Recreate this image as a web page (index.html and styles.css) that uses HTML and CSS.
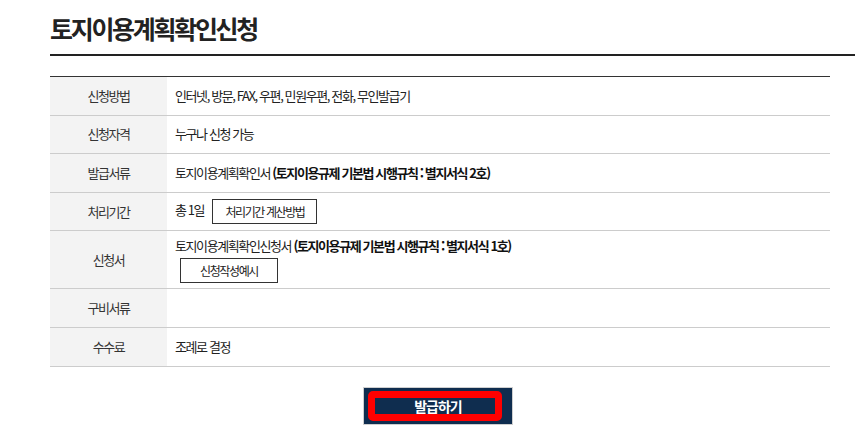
FILE: index.html
```html
<!DOCTYPE html>
<html lang="ko">
<head>
<meta charset="utf-8">
<title>토지이용계획확인신청</title>
<link rel="stylesheet" href="styles.css">
</head>
<body>
<div class="page">
  <h1 class="title">토지이용계획확인신청</h1>
  <table class="info">
    <tbody>
      <tr>
        <th>신청방법</th>
        <td>인터넷, 방문, FAX, 우편, 민원우편, 전화, 무인발급기</td>
      </tr>
      <tr>
        <th>신청자격</th>
        <td>누구나 신청 가능</td>
      </tr>
      <tr>
        <th>발급서류</th>
        <td>토지이용계획확인서 <b>(토지이용규제 기본법 시행규칙 : 별지서식 2호)</b></td>
      </tr>
      <tr>
        <th>처리기간</th>
        <td>총 1일 <span class="box-btn btn-calc">처리기간 계산방법</span></td>
      </tr>
      <tr class="tall">
        <th>신청서</th>
        <td>토지이용계획확인신청서 <b>(토지이용규제 기본법 시행규칙 : 별지서식 1호)</b><br><span class="box-btn btn-sample">신청작성예시</span></td>
      </tr>
      <tr>
        <th>구비서류</th>
        <td></td>
      </tr>
      <tr>
        <th>수수료</th>
        <td>조례로 결정</td>
      </tr>
    </tbody>
  </table>
  <div class="actions">
    <a class="issue-btn">발급하기<span class="highlight"></span></a>
  </div>
</div>
</body>
</html>
```
FILE: styles.css
```css
html, body {
  margin: 0;
  padding: 0;
  background: #fff;
}
body {
  font-family: "Noto Sans CJK KR", "Noto Sans", sans-serif;
  color: #222;
}
.page {
  padding-left: 50px;
}
.title {
  margin: 0;
  padding: 10px 0 8px 0;
  font-size: 25px;
  line-height: 36px;
  font-weight: 700;
  letter-spacing: -2.3px;
  color: #222;
  border-bottom: 2px solid #222;
}
.info {
  margin-top: 20px;
  width: 780px;
  border-collapse: collapse;
  border-top: 1px solid #333;
  border-bottom: 1px solid #333;
  font-size: 13px;
  letter-spacing: -1.4px;
}
.info th,
.info td {
  height: 38.6px;
  box-sizing: border-box;
  padding: 0 8px;
  line-height: 18px;
  border-bottom: 1px solid #ccc;
  vertical-align: middle;
}
.info th {
  width: 117px;
  box-sizing: border-box;
  background: #f3f3f3;
  font-weight: 400;
  color: #333;
  text-align: center;
}
.info td {
  text-align: left;
  color: #222;
}
.info tr.tall th,
.info tr.tall td {
  height: 58px;
}
.info b {
  font-weight: 700;
  color: #111;
}
.box-btn {
  display: inline-block;
  box-sizing: border-box;
  height: 25px;
  line-height: 23px;
  border: 1px solid #333;
  font-size: 12px;
  text-align: center;
  color: #222;
  vertical-align: middle;
}
.btn-calc {
  width: 105px;
  margin-left: 6px;
}
.btn-sample {
  width: 98px;
  margin-left: 5px;
  margin-top: 3px;
}
.actions {
  width: 776px;
  display: flex;
  justify-content: center;
  margin-top: 20px;
}
.issue-btn {
  position: relative;
  display: block;
  width: 150px;
  height: 38px;
  box-sizing: border-box;
  border: 1px solid #cfcfcf;
  background: #0f2d4f;
  color: #fff;
  font-size: 14px;
  font-weight: 700;
  letter-spacing: -1px;
  line-height: 36px;
  text-align: center;
}
.highlight {
  position: absolute;
  left: 4px;
  top: 3px;
  right: 10px;
  bottom: 3px;
  border: 7px solid #ff0000;
  border-radius: 5px;
}
```
